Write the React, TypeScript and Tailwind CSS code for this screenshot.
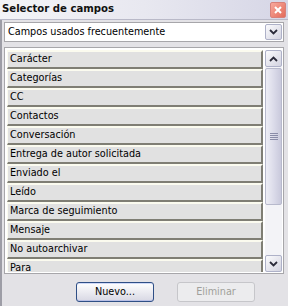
import React from "react";

const fields = [
  "Carácter",
  "Categorías",
  "CC",
  "Contactos",
  "Conversación",
  "Entrega de autor solicitada",
  "Enviado el",
  "Leído",
  "Marca de seguimiento",
  "Mensaje",
  "No autoarchivar",
  "Para",
];

function Chevron({ up = false }: { up?: boolean }) {
  return (
    <svg width="9" height="6" viewBox="0 0 9 6" className={up ? "rotate-180" : ""}>
      <path d="M1 1 L4.5 4.5 L8 1" fill="none" stroke="#2b2b3a" strokeWidth="1.8" />
    </svg>
  );
}

function ScrollButton({ up = false }: { up?: boolean }) {
  return (
    <div className="h-[17px] w-[17px] flex items-center justify-center rounded-[2px] border border-[#aeb1c8] bg-gradient-to-br from-[#fbfbfd] to-[#d3d3e0]">
      <Chevron up={up} />
    </div>
  );
}

export default function App() {
  return (
    <div className="w-[288px] h-[306px] bg-[#e3e2e6] flex flex-col overflow-hidden text-[10.75px] text-black font-['DejaVu_Sans_Condensed','Liberation_Sans',sans-serif]">
      <div className="h-[20px] shrink-0 flex items-center justify-between pl-[2px] pr-[2px] bg-gradient-to-r from-[#f4f4f7] via-[#e8e8f0] to-[#d6d6e6] border-b border-[#b9b9c8]">
        <span className="font-bold text-[11.25px] text-[#111]">Selector de campos</span>
        <div className="w-[16px] h-[16px] rounded-[2px] bg-gradient-to-br from-[#f7a89c] to-[#e36b5b] border border-[#d8807a] flex items-center justify-center">
          <svg width="10" height="10" viewBox="0 0 10 10">
            <path d="M2 2 L8 8 M8 2 L2 8" stroke="#fff" strokeWidth="2" />
          </svg>
        </div>
      </div>

      <div className="flex-1 flex flex-col border-l-2 border-[#9d9da6] pl-[2px] pr-[4px]">
        <div className="mt-[2px] h-[20px] flex items-center justify-between bg-white border border-[#a7a6aa] pl-[3px] pr-[1px]">
          <span>Campos usados frecuentemente</span>
          <div className="h-[16px] w-[17px] flex items-center justify-center rounded-[2px] border border-[#aeb1c8] bg-gradient-to-br from-[#fbfbfd] to-[#d3d3e0]">
            <Chevron />
          </div>
        </div>

        <div className="mt-[5px] h-[227px] flex bg-white border border-[#a7a6aa] pl-[2px] pt-[2px] pr-[1px] pb-[1px] gap-[2px]">
          <div className="flex-1 flex flex-col overflow-hidden">
            {fields.map((f) => (
              <div
                key={f}
                className="h-[19px] shrink-0 flex items-center pl-[2px] bg-[#e1e1e1] border-t-2 border-t-[#fbfbef] border-b-2 border-b-[#7f7e74] border-l border-l-[#fbfbef] border-r-2 border-r-[#7f7e74]"
              >
                {f}
              </div>
            ))}
          </div>
          <div className="w-[17px] flex flex-col bg-[#f3f3f7]">
            <ScrollButton up />
            <div className="mt-[1px] h-[137px] rounded-[2px] border border-[#b7b9cc] bg-gradient-to-r from-[#eeeef5] via-[#dcdcea] to-[#c9c9dc] flex items-center justify-center">
              <svg width="8" height="7" viewBox="0 0 8 7">
                <path d="M0 0.5 H8 M0 2.5 H8 M0 4.5 H8 M0 6.5 H8" stroke="#8a8ca8" strokeWidth="1" />
              </svg>
            </div>
            <div className="flex-1" />
            <ScrollButton />
          </div>
        </div>

        <div className="flex-1 flex items-center gap-[23px] pl-[72px] pt-[4px]">
          <button className="w-[78px] h-[20px] rounded-[3px] border border-[#2f4f86] bg-gradient-to-b from-[#ffffff] to-[#d8d8e4] shadow-[inset_0_-1px_0_#b9c0e6,inset_0_1px_0_#cfd9f7] text-black">
            Nuevo...
          </button>
          <button className="w-[78px] h-[20px] rounded-[3px] border border-[#c6c6ca] bg-[#ececee] text-[#a0a09a]">
            Eliminar
          </button>
        </div>
      </div>
    </div>
  );
}
